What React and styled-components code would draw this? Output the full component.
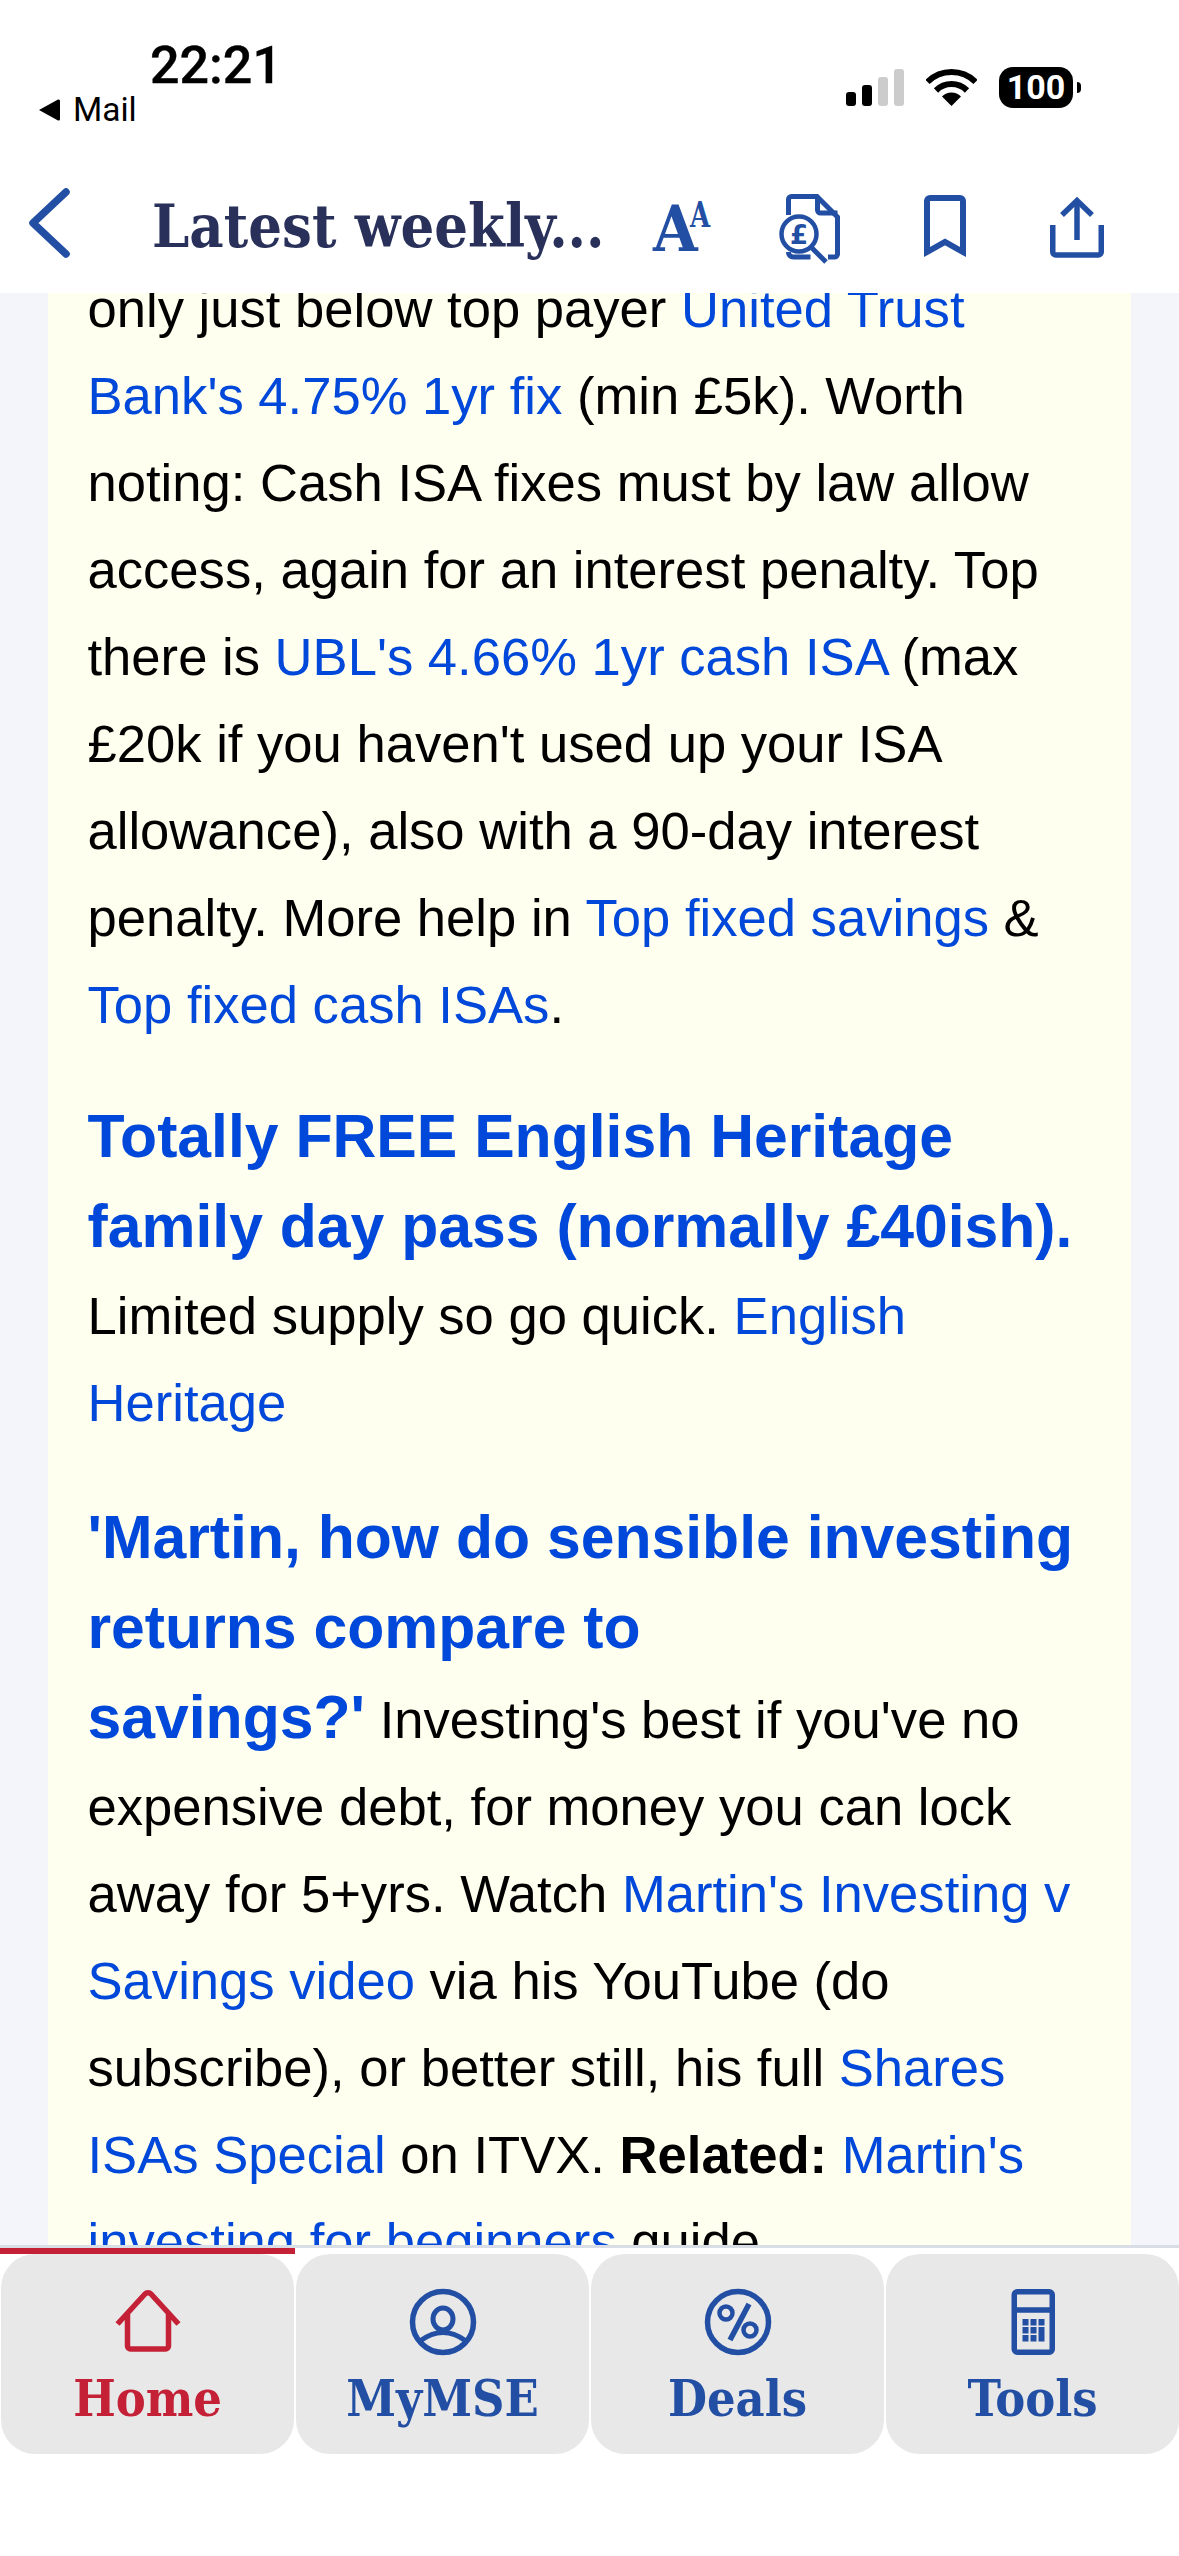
import React from "react";
import styled, { createGlobalStyle } from "styled-components";

const Global = createGlobalStyle`
  html, body { margin: 0; padding: 0; background: #fff; }
  * { box-sizing: border-box; }
`;

const SLAB = '"DejaVu Serif", "Liberation Serif", serif';
const SANS = '"Liberation Sans", Arial, sans-serif';
const UI = 'Roboto, "Liberation Sans", sans-serif';
const BLUE = "#224fa3";
const RED = "#c42036";
const LINK = "#0048da";

const Screen = styled.div`
  width: 1179px;
  height: 2556px;
  display: flex;
  flex-direction: column;
  overflow: hidden;
  background: #fff;
`;

const StatusBar = styled.div`
  height: 160px;
  flex: none;
  padding: 36px 98px 0 39px;
  display: flex;
  justify-content: space-between;
  align-items: flex-start;
`;
const StatusLeft = styled.div`
  display: flex;
  flex-direction: column;
`;
const Time = styled.div`
  margin-left: 111px;
  font: 500 52px/60px ${UI};
  color: #000;
  -webkit-text-stroke: 0.4px #000;
`;
const BackToMail = styled.div`
  display: flex;
  align-items: center;
  gap: 13px;
  font: 400 33.5px/38px ${UI};
  color: #000;
  margin-top: -5px;
`;
const StatusRight = styled.div`
  display: flex;
  align-items: center;
  margin-top: 31px;
`;
const Signal = styled.div`
  display: flex;
  align-items: flex-end;
  gap: 6px;
  height: 37px;
  margin-right: 22px;
`;
const SignalBar = styled.span`
  display: block;
  width: 10px;
  border-radius: 3px;
  height: ${(p) => p.$h}px;
  background: ${(p) => (p.$on ? "#000" : "#cccccc")};
`;
const Battery = styled.div`
  width: 74px;
  height: 41px;
  margin-left: 22px;
  border-radius: 14px;
  background: #000;
  color: #fff;
  font: 700 34px/41px ${UI};
  text-align: center;
`;
const BatteryCap = styled.span`
  display: block;
  width: 4px;
  height: 11px;
  margin-left: 4px;
  background: #000;
  border-radius: 0 4px 4px 0;
`;

const Nav = styled.div`
  height: 133px;
  flex: none;
  padding: 0 36px 0 29px;
  display: flex;
  align-items: center;
`;
const NavTitle = styled.div`
  flex: 1;
  margin-left: 82px;
  font: 700 59px/70px ${SLAB};
  font-stretch: condensed;
  color: #29315a;
  white-space: nowrap;
  letter-spacing: 0;
`;
const NavSlot = styled.div`
  width: 132px;
  height: 70px;
  flex: none;
  display: flex;
  justify-content: center;
`;

const Content = styled.div`
  flex: 1;
  min-height: 0;
  overflow: hidden;
  background: #f3f5fb;
  padding: 0 48px;
`;
const Card = styled.div`
  background: #ffffef;
  padding: 0 40px 0 39.5px;
  margin-top: -28px;
  height: 2100px;
`;
const Para = styled.p`
  margin: 0 0 ${(p) => p.$after ?? 44}px;
  font: 400 52.6px/87px ${SANS};
  color: #000;
`;
const A = styled.a`
  color: ${LINK};
  text-decoration: none;
`;
const Head = styled.a`
  color: ${LINK};
  font-size: 60.7px;
  line-height: 89px;
  font-weight: 700;
`;
const Keep = styled.span`
  white-space: nowrap;
`;

const TabBar = styled.div`
  flex: none;
  height: 311px;
  border-top: 3px solid #d8dde6;
  background: #fff;
`;
const TabIndicator = styled.div`
  width: 295px;
  height: 6px;
  background: ${RED};
`;
const Tabs = styled.div`
  display: grid;
  grid-template-columns: repeat(4, 293px);
  column-gap: 2px;
  padding-left: 1px;
`;
const Tab = styled.div`
  height: 200px;
  border-radius: 34px;
  background: #e8e8e8;
  padding-top: 33px;
  display: flex;
  flex-direction: column;
  align-items: center;
  color: ${(p) => (p.$active ? RED : BLUE)};
`;
const TabLabel = styled.div`
  font: 700 50px/60px ${SLAB};
  font-stretch: condensed;
  margin-top: 12px;
`;

const Chevron = () => (
  <svg width="41" height="70" viewBox="0 0 41 70" style={{ overflow: "visible" }} fill="none" stroke={BLUE} strokeWidth="7.5" strokeLinecap="round" strokeLinejoin="round">
    <path d="M37 0 L4 31 L37 62" />
  </svg>
);
const TextSizeIcon = () => (
  <svg width="70" height="70" viewBox="0 0 70 70" fill={BLUE}>
    <text x="7" y="59" fontFamily="DejaVu Serif" fontWeight="700" fontStretch="condensed" fontSize="64">A</text>
    <text transform="translate(44 35) scale(0.72 1)" fontFamily="DejaVu Serif" fontWeight="700" fontSize="36">A</text>
  </svg>
);
const DocIcon = () => (
  <svg width="70" height="72" viewBox="0 0 70 72" fill="none" stroke={BLUE} strokeWidth="5">
    <path d="M10.5 23V7.5a3 3 0 0 1 3-3H39l20.5 20.5V62a3 3 0 0 1-3 3H50" />
    <path d="M39.5 5v13a3 3 0 0 0 3 3h17" />
    <path d="M10.5 60c0 3 2 5 5 5h17" />
    <circle cx="21" cy="42" r="17.5" strokeWidth="4.5" />
    <path d="M33 55 L48 70" strokeWidth="5" />
    <text x="21" y="52" textAnchor="middle" fontFamily="DejaVu Sans" fontWeight="700" fontSize="26" fill={BLUE} stroke="none">£</text>
  </svg>
);
const BookmarkIcon = () => (
  <svg width="70" height="70" viewBox="0 0 70 70" fill="none" stroke={BLUE} strokeWidth="6">
    <path d="M17 60 V9 a3 3 0 0 1 3-3 H50 a3 3 0 0 1 3 3 V60 L35 50 Z" />
  </svg>
);
const ShareIcon = () => (
  <svg width="70" height="70" viewBox="0 0 70 70" fill="none" stroke={BLUE} strokeWidth="5.5">
    <path d="M10.75 33 V60 a3 3 0 0 0 3 3 H56.25 a3 3 0 0 0 3-3 V33" />
    <path d="M35 48 V10" />
    <path d="M20 23 L35 8.5 L50 23" />
  </svg>
);
const HomeIcon = () => (
  <svg width="70" height="70" viewBox="0 0 70 70" fill="none" stroke={RED} strokeWidth="5.5">
    <path d="M4.5 37 L32 7 a4 4 0 0 1 6 0 L65.5 37" />
    <path d="M14.5 27 V59 a3 3 0 0 0 3 3 H52.5 a3 3 0 0 0 3-3 V27" />
  </svg>
);
const PersonIcon = () => (
  <svg width="70" height="70" viewBox="0 0 70 70" fill="none" stroke={BLUE} strokeWidth="5.5">
    <circle cx="35" cy="35" r="30.5" />
    <ellipse cx="35" cy="32" rx="10" ry="11" strokeWidth="5" />
    <path d="M12 54 Q35 37 58 54" strokeWidth="5" />
  </svg>
);
const PercentIcon = () => (
  <svg width="70" height="70" viewBox="0 0 70 70" fill="none" stroke={BLUE} strokeWidth="5.5">
    <circle cx="35" cy="35" r="30.5" />
    <circle cx="23" cy="26" r="6.5" strokeWidth="4.5" />
    <circle cx="47" cy="43" r="6.5" strokeWidth="4.5" />
    <path d="M46 17 L27 53" />
  </svg>
);
const CalcIcon = () => {
  const squares = [];
  [0, 8, 16].forEach((y, r) =>
    [0, 8, 16].forEach((x, c) => {
      if (c === 2 && r > 0) return;
      squares.push(<rect key={`${r}${c}`} x={24.5 + x} y={32 + y} width="6" height="6.5" />);
    })
  );
  return (
    <svg width="70" height="70" viewBox="0 0 70 70" fill="none" stroke={BLUE} strokeWidth="5.5">
      <rect x="16.25" y="4.75" width="38" height="60.5" rx="3" />
      <path d="M16 23 H54" />
      <g fill={BLUE} stroke="none">
        {squares}
        <rect x="40.5" y="40" width="6" height="14.5" />
      </g>
    </svg>
  );
};
const WifiIcon = () => (
  <svg width="51" height="37" viewBox="0 0 51 37" fill="none" stroke="#000" strokeWidth="6">
    <path d="M1.5 13 A34 34 0 0 1 49.5 13" />
    <path d="M10 21.5 A22 22 0 0 1 41 21.5" />
    <path d="M25.5 37 L16 27.5 A13.4 13.4 0 0 1 35 27.5 Z" fill="#000" stroke="none" />
  </svg>
);
const BackTriangle = () => (
  <svg width="21" height="22" viewBox="0 0 21 22" fill="#000">
    <path d="M0 11 L19 0.5 Q21 0 21 2 V20 Q21 22 19 21.5 Z" />
  </svg>
);

export default function App() {
  return (
    <Screen>
      <Global />
      <StatusBar>
        <StatusLeft>
          <Time>22:21</Time>
          <BackToMail>
            <BackTriangle />
            Mail
          </BackToMail>
        </StatusLeft>
        <StatusRight>
          <Signal>
            <SignalBar $h={14} $on />
            <SignalBar $h={21} $on />
            <SignalBar $h={29} />
            <SignalBar $h={37} />
          </Signal>
          <WifiIcon />
          <Battery>100</Battery>
          <BatteryCap />
        </StatusRight>
      </StatusBar>
      <Nav>
        <Chevron />
        <NavTitle>Latest weekly...</NavTitle>
        <NavSlot><TextSizeIcon /></NavSlot>
        <NavSlot><DocIcon /></NavSlot>
        <NavSlot><BookmarkIcon /></NavSlot>
        <NavSlot><ShareIcon /></NavSlot>
      </Nav>
      <Content>
        <Card>
          <Para>
            only just below top payer <A>United Trust Bank's 4.75% 1yr fix</A> (min £5k). Worth noting: Cash ISA fixes must by law allow access, again for an interest penalty. Top there is <A>UBL's 4.66% 1yr cash ISA</A> (max £20k if you haven't used up your ISA allowance), also with a 90-day interest penalty. More help in <A>Top fixed savings</A> & <A>Top fixed cash ISAs</A>.
          </Para>
          <Para $after={47}>
            <Head>Totally FREE English Heritage family day pass (normally £40ish).</Head>{" "}
            Limited supply so go quick. <A>English Heritage</A>
          </Para>
          <Para>
            <Head>'Martin, how do sensible investing returns compare to </Head>
            <Keep><Head>savings?'</Head> Investing's</Keep> best if you've no expensive debt, for money you can lock away for 5+yrs. Watch <A>Martin's Investing v Savings video</A> via his YouTube (do subscribe), or better still, his full <A>Shares ISAs Special</A> on ITVX. <b>Related:</b> <A>Martin's investing for beginners</A> guide.
          </Para>
        </Card>
      </Content>
      <TabBar>
        <TabIndicator />
        <Tabs>
          <Tab $active><HomeIcon /><TabLabel>Home</TabLabel></Tab>
          <Tab><PersonIcon /><TabLabel>MyMSE</TabLabel></Tab>
          <Tab><PercentIcon /><TabLabel>Deals</TabLabel></Tab>
          <Tab><CalcIcon /><TabLabel>Tools</TabLabel></Tab>
        </Tabs>
      </TabBar>
    </Screen>
  );
}
